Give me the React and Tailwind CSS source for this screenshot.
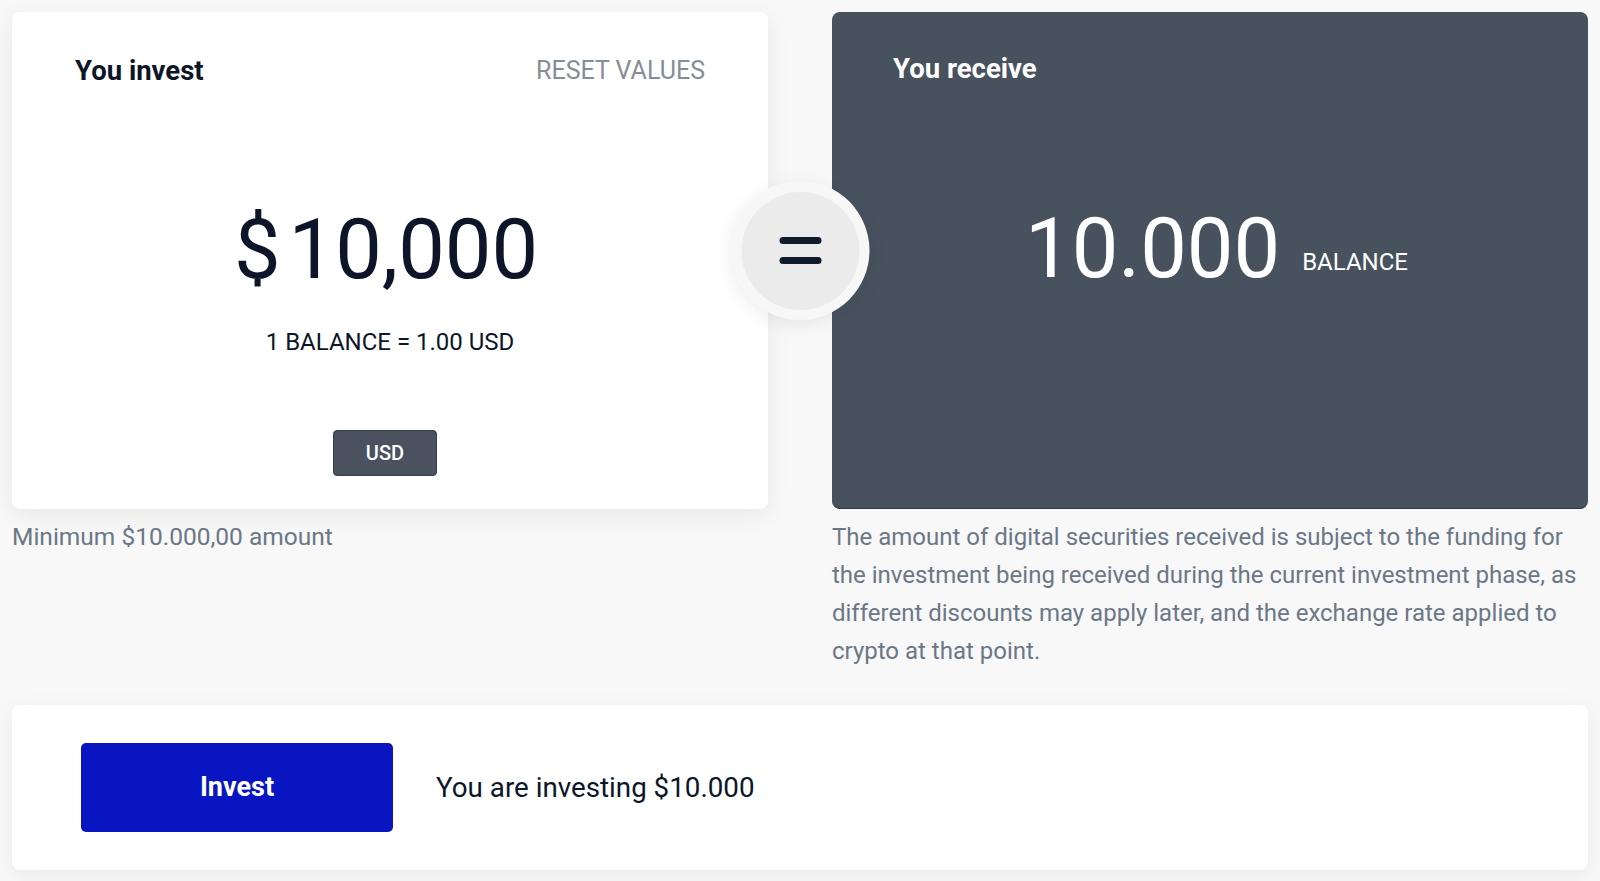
export default function App() {
  return (
    <div className="min-h-screen bg-[#f8f8f8] p-[12px] font-['Roboto',sans-serif]">
      <div className="relative flex gap-[64px]">
        {/* invest side */}
        <div className="flex flex-1 flex-col">
          <div className="flex h-[497px] flex-col rounded-lg bg-white px-[63px] pt-[44px] shadow-[0_6px_24px_rgba(0,0,0,0.07)]">
            <div className="flex items-center justify-between">
              <h2 className="text-[27.5px] font-bold leading-[30px] text-[#0c1628]">You invest</h2>
              <button className="text-[25px] leading-[30px] text-[#878d96]">RESET VALUES</button>
            </div>
            <div className="mt-[122px] flex justify-center pr-[8px] text-[83px] leading-none text-[#0c1628]">
              <span>$</span>
              <span className="ml-[8px]">10,000</span>
            </div>
            <p className="mt-[35px] text-center text-[24px] leading-[32px] text-[#0c1628]">
              1 BALANCE = 1.00 USD
            </p>
            <div className="mt-[72px] flex justify-center pr-[10px]">
              <button className="h-[46px] w-[104px] rounded-[4px] border border-[#353d49] bg-[#4a5260] text-[20px] font-medium text-white">
                USD
              </button>
            </div>
          </div>
          <p className="mt-[9px] text-[24.5px] leading-[38px] text-[#6b7786]">Minimum $10.000,00 amount</p>
        </div>

        {/* receive side */}
        <div className="flex flex-1 flex-col">
          <div className="flex h-[497px] flex-col rounded-lg border-b border-[#2e3744] bg-[#48525f] pl-[61px] pr-[40px] pt-[42px]">
            <h2 className="text-[27.5px] font-bold leading-[30px] text-white">You receive</h2>
            <div className="mt-[123px] flex items-end justify-center gap-[22px] pr-[8px] text-white">
              <span className="text-[83px] leading-none">10.000</span>
              <span className="mb-[16px] text-[24px] leading-[24px]">BALANCE</span>
            </div>
          </div>
          <p className="mt-[9px] text-[24px] leading-[38px] text-[#6b7786]">
            The amount of digital securities received is subject to the funding for the investment being received
            during the current investment phase, as different discounts may apply later, and the exchange rate
            applied to crypto at that point.
          </p>
        </div>

        {/* equals badge */}
        <div className="absolute left-1/2 top-[169px] flex h-[139px] w-[139px] -translate-x-1/2 items-center justify-center rounded-full bg-[#f7f7f7] shadow-[0_4px_18px_rgba(0,0,0,0.08)]">
          <div className="flex h-[118px] w-[118px] flex-col items-center justify-center gap-[13px] rounded-full bg-[#ebebeb]">
            <span className="h-[7px] w-[42px] rounded-full bg-[#0f1a2b]" />
            <span className="h-[7px] w-[42px] rounded-full bg-[#0f1a2b]" />
          </div>
        </div>
      </div>

      <div className="mt-[35px] flex h-[165px] items-center gap-[43px] rounded-lg bg-white pl-[69px] shadow-[0_6px_24px_rgba(0,0,0,0.06)]">
        <button className="h-[89px] w-[312px] rounded-[5px] bg-[#0a15c2] text-[27px] font-bold text-white">Invest</button>
        <p className="text-[27.75px] text-[#0c1628]">You are investing $10.000</p>
      </div>
    </div>
  );
}
